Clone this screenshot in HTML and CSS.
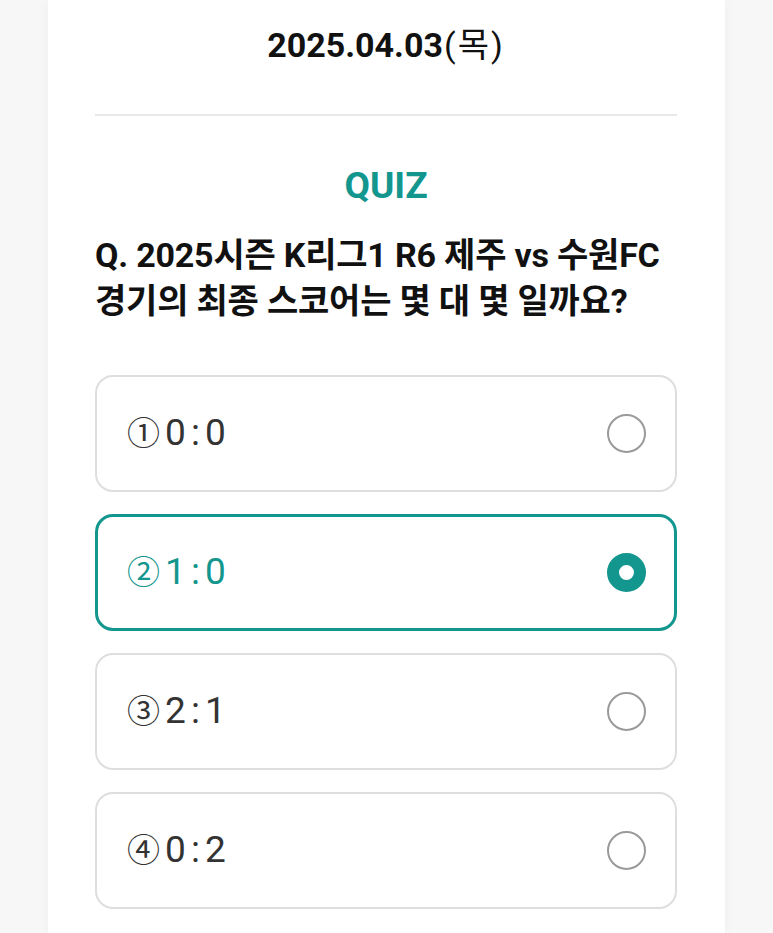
FILE: index.html
```html
<!DOCTYPE html>
<html lang="ko">

<head>
    <meta charset="UTF-8">
    <meta name="viewport" content="width=device-width, initial-scale=1.0">
    <title>오늘의 퀴즈</title>
    <link rel="stylesheet" href="styles.css">
</head>

<body>
    <div class="card">
        <div class="date-row">
            <span class="date">2025.04.03</span><span class="weekday">(목)</span>
        </div>

        <h2 class="quiz-title">QUIZ</h2>
        <p class="question">Q. 2025시즌 K리그1 R6 제주 vs 수원FC<br>경기의 최종 스코어는 몇 대 몇 일까요?</p>

        <!-- answer list -->
        <ul class="options">
            <li class="option">
                <span class="label"><span class="num">①</span>0 : 0</span>
                <span class="radio"></span>
            </li>
            <li class="option selected">
                <span class="label"><span class="num">②</span>1 : 0</span>
                <span class="radio"></span>
            </li>
            <li class="option">
                <span class="label"><span class="num">③</span>2 : 1</span>
                <span class="radio"></span>
            </li>
            <li class="option">
                <span class="label"><span class="num">④</span>0 : 2</span>
                <span class="radio"></span>
            </li>
        </ul>
    </div>
</body>

</html>
```

FILE: styles.css
```css
body {
    margin: 0;
    background-color: #f7f7f7;
    font-family: Roboto, "Noto Sans CJK KR", sans-serif;
    color: #111;
}

.card {
    width: 677px;
    min-height: 933px;
    margin: 0 auto;
    box-sizing: border-box;
    padding: 23px 48px 0 47px;
    background-color: #fff;
    box-shadow: 0 0 12px rgba(0, 0, 0, 0.04);
}

.date-row {
    height: 44px;
    line-height: 44px;
    padding-bottom: 47px;
    border-bottom: 2px solid #e8e8e8;
    text-align: center;
    font-size: 34px;
}

.date {
    font-weight: 700;
}

.weekday {
    font-weight: 400;
    letter-spacing: 2px;
    margin-left: 1px;
}

.quiz-title {
    margin: 48px 0 0;
    line-height: 44px;
    font-size: 37px;
    font-weight: 700;
    color: #13968e;
    text-align: center;
}

.question {
    margin: 24px 0 0;
    font-size: 34px;
    line-height: 46px;
    font-weight: 700;
    letter-spacing: -0.2px;
}

.options {
    list-style-type: none;
    margin: 51px 0 0;
    padding: 0;
    display: flex;
    flex-direction: column;
    gap: 22px;
}

.option {
    height: 117px;
    box-sizing: border-box;
    border: 2px solid #dedede;
    border-radius: 18px;
    padding: 0 29px 0 30px;
    display: flex;
    align-items: center;
    justify-content: space-between;
    color: #333;
}

.label {
    font-size: 37px;
    letter-spacing: -2px;
    line-height: 40px;
}

.num {
    font-size: 33px;
    margin-right: 5px;
    letter-spacing: 0;
}

.radio {
    width: 39px;
    height: 39px;
    box-sizing: border-box;
    border: 2px solid #9a9a9a;
    border-radius: 50%;
}

.option.selected {
    border: 3px solid #13968e;
    padding: 0 28px 0 29px;
    color: #13968e;
}

.option.selected .radio {
    border: 12px solid #13968e;
}
```
